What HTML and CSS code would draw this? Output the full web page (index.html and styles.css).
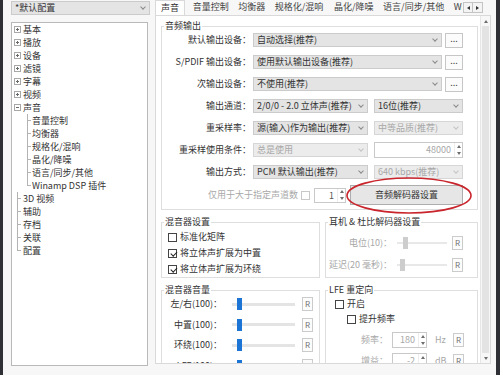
FILE: index.html
```html
<!DOCTYPE html>
<html lang="zh-CN">
<head>
<meta charset="utf-8">
<title>选项</title>
<link rel="stylesheet" href="styles.css">
</head>
<body>
<div class="window">
  <div class="edge edge-l"></div>
  <aside class="sidebar">
    <div class="combo profile"><span class="txt">*默认配置</span><span class="chev"></span></div>
    <ul class="tree">
      <li class="tn"><span class="exp"></span>基本</li>
      <li class="tn"><span class="exp"></span>播放</li>
      <li class="tn"><span class="exp"></span>设备</li>
      <li class="tn"><span class="exp"></span>滤镜</li>
      <li class="tn"><span class="exp"></span>字幕</li>
      <li class="tn"><span class="exp"></span>视频</li>
      <li class="tn"><span class="exp open"></span>声音</li>
      <li class="tc"><span class="ln"></span>音量控制</li>
      <li class="tc"><span class="ln"></span>均衡器</li>
      <li class="tc"><span class="ln"></span>规格化/混响</li>
      <li class="tc"><span class="ln"></span>晶化/降噪</li>
      <li class="tc"><span class="ln"></span>语言/同步/其他</li>
      <li class="tc last"><span class="ln"></span>Winamp DSP 插件</li>
      <li class="tl"><span class="ln"></span>3D 视频</li>
      <li class="tl"><span class="ln"></span>辅助</li>
      <li class="tl"><span class="ln"></span>存档</li>
      <li class="tl"><span class="ln"></span>关联</li>
      <li class="tl last"><span class="ln"></span>配置</li>
    </ul>
  </aside>
  <main class="main">
    <nav class="tabs">
      <div class="tablist">
        <span class="tab on">声音</span>
        <span class="tab">音量控制</span>
        <span class="tab">均衡器</span>
        <span class="tab">规格化/混响</span>
        <span class="tab">晶化/降噪</span>
        <span class="tab">语言/同步/其他</span>
        <span class="tab">Winamp DSP</span>
      </div>
      <div class="tabnav"><span class="nb"><i class="tri-l"></i></span><span class="nb"><i class="tri-r"></i></span></div>
    </nav>
    <section class="panel">
      <div class="content">
        <fieldset class="grp">
          <legend>音频输出</legend>
          <div class="rows">
            <div class="row">
              <span class="lbl">默认输出设备：</span>
              <div class="combo w-full"><span class="txt">自动选择(推荐)</span><span class="chev"></span></div>
              <span class="more">...</span>
            </div>
            <div class="row">
              <span class="lbl">S/PDIF 输出设备：</span>
              <div class="combo w-full"><span class="txt">使用默认输出设备(推荐)</span><span class="chev"></span></div>
              <span class="more">...</span>
            </div>
            <div class="row">
              <span class="lbl">次输出设备：</span>
              <div class="combo w-full"><span class="txt">不使用(推荐)</span><span class="chev"></span></div>
              <span class="more">...</span>
            </div>
            <div class="row">
              <span class="lbl">输出通道：</span>
              <div class="combo w-l"><span class="txt">2/0/0 - 2.0 立体声(推荐)</span><span class="chev"></span></div>
              <div class="combo w-r"><span class="txt">16位(推荐)</span><span class="chev"></span></div>
            </div>
            <div class="row">
              <span class="lbl">重采样率：</span>
              <div class="combo w-l"><span class="txt">源(输入)作为输出(推荐)</span><span class="chev"></span></div>
              <div class="combo w-r off"><span class="txt">中等品质(推荐)</span><span class="chev"></span></div>
            </div>
            <div class="row">
              <span class="lbl">重采样使用条件：</span>
              <div class="combo w-l off"><span class="txt">总是使用</span><span class="chev"></span></div>
              <div class="spin w-r off"><span class="v">48000</span><span class="arr"><i class="up"></i><i class="dn"></i></span></div>
            </div>
            <div class="row">
              <span class="lbl">输出方式：</span>
              <div class="combo w-l"><span class="txt">PCM 默认输出(推荐)</span><span class="chev"></span></div>
              <div class="combo w-r off"><span class="txt">640 kbps(推荐)</span><span class="chev"></span></div>
            </div>
            <div class="row tall">
              <span class="lbl lbl-wide dim">仅用于大于指定声道数</span>
              <span class="cb dis"></span>
              <div class="spin sp-ch"><span class="v">1</span><span class="arr"><i class="up"></i><i class="dn"></i></span></div>
              <span class="btn">音频解码器设置</span>
            </div>
          </div>
        </fieldset>

        <div class="pair">
          <fieldset class="grp mix">
            <legend>混音器设置</legend>
            <div class="ck"><span class="cb"></span>标准化矩阵</div>
            <div class="ck"><span class="cb on"></span>将立体声扩展为中置</div>
            <div class="ck"><span class="cb on"></span>将立体声扩展为环绕</div>
          </fieldset>
          <fieldset class="grp hp">
            <legend>耳机 &amp; 杜比解码器设置</legend>
            <div class="srow">
              <span class="slbl dim">电位(10)：</span>
              <div class="slider hp-s"><span class="trk" style="width:6px"></span><span class="thumb"></span><span class="trk rest"></span></div>
              <span class="rbtn">R</span>
            </div>
            <div class="srow">
              <span class="slbl dim">延迟(20 毫秒)：</span>
              <div class="slider hp-s"><span class="trk" style="width:3px"></span><span class="thumb"></span><span class="trk rest"></span></div>
              <span class="rbtn">R</span>
            </div>
          </fieldset>
        </div>

        <div class="pair">
          <fieldset class="grp vol">
            <legend>混音器音量</legend>
            <div class="vrow">
              <span class="vlbl">左/右(100)：</span>
              <div class="slider v-s"><span class="trk" style="width:5px"></span><span class="thumb"></span><span class="trk rest"></span></div>
              <span class="rbtn">R</span>
            </div>
            <div class="vrow">
              <span class="vlbl">中置(100)：</span>
              <div class="slider v-s"><span class="trk" style="width:5px"></span><span class="thumb"></span><span class="trk rest"></span></div>
              <span class="rbtn">R</span>
            </div>
            <div class="vrow">
              <span class="vlbl">环绕(100)：</span>
              <div class="slider v-s"><span class="trk" style="width:5px"></span><span class="thumb"></span><span class="trk rest"></span></div>
              <span class="rbtn">R</span>
            </div>
            <div class="vrow">
              <span class="vlbl">LFE(100)：</span>
              <div class="slider v-s"><span class="trk" style="width:5px"></span><span class="thumb"></span><span class="trk rest"></span></div>
              <span class="rbtn">R</span>
            </div>
          </fieldset>
          <fieldset class="grp lfe">
            <legend>LFE 重定向</legend>
            <div class="ck l1"><span class="cb"></span>开启</div>
            <div class="ck l2"><span class="cb"></span>提升频率</div>
            <div class="frow">
              <span class="flbl dim">频率：</span>
              <div class="spin sp-f off"><span class="v">180</span><span class="arr"><i class="up"></i><i class="dn"></i></span></div>
              <span class="unit dim">Hz</span>
              <span class="rbtn">R</span>
            </div>
            <div class="frow">
              <span class="flbl dim">增益：</span>
              <div class="spin sp-f off"><span class="v">-2</span><span class="arr"><i class="up"></i><i class="dn"></i></span></div>
              <span class="unit dim">dB</span>
              <span class="rbtn">R</span>
            </div>
          </fieldset>
        </div>
      </div>
      <div class="vscroll">
        <span class="sa"><i class="up"></i></span>
        <span class="strack"></span>
        <span class="sa"><i class="dn"></i></span>
      </div>
    </section>
  </main>
  <div class="edge edge-r"></div>
</div>
<svg class="mark" width="132" height="40" viewBox="0 0 132 40"><ellipse cx="65" cy="19.5" rx="62" ry="17.5" fill="none" stroke="#c9252c" stroke-width="1.6"/></svg>
</body>
</html>
```
FILE: styles.css
```css
* { box-sizing: border-box; }
html, body { margin: 0; padding: 0; }
body {
  width: 500px; height: 375px; overflow: hidden; position: relative;
  background: #f7f7f7; color: #333;
  font-family: "Noto Sans CJK SC", "Noto Sans", sans-serif;
  font-size: 9px; line-height: 12px;
}
.window { display: flex; height: 375px; }
.edge { flex: none; background: #2f3036; }
.edge-l { width: 3px; }
.edge-r { width: 4px; margin-left: 5px; }

/* sidebar */
.sidebar { flex: none; width: 139px; margin-left: 8px; display: flex; flex-direction: column; }
.combo {
  display: flex; align-items: center; height: 14px; padding-left: 3px;
  background: #e4e4e4; border: 1px solid #cbcbcb; white-space: nowrap; overflow: hidden;
}
.combo .txt { flex: 1; overflow: hidden; line-height: 12px; }
.chev { flex: none; width: 12px; height: 12px; display: flex; align-items: center; justify-content: center; }
.chev::before {
  content: ""; width: 3px; height: 3px; margin-top: -2px;
  border-right: 1px solid #8a8a8a; border-bottom: 1px solid #8a8a8a; transform: rotate(45deg);
}
.profile { margin-top: 1px; }
.tree {
  list-style: none; margin: 7px 0 0; padding: 0; width: 137px; height: 344px;
  background: #fff; border: 1px solid #b9b9b9;
}
.tree li { display: flex; align-items: center; height: 13px; line-height: 13px; white-space: nowrap; }
.exp { flex: none; width: 7px; height: 7px; margin: 0 2px; border: 1px solid #a8a8a8; position: relative; }
.exp::before { content: ""; position: absolute; left: 1px; right: 1px; top: 2px; height: 1px; background: #6a6a6a; }
.exp::after { content: ""; position: absolute; top: 1px; bottom: 1px; left: 2px; width: 1px; background: #6a6a6a; }
.exp.open::after { display: none; }
.ln {
  flex: none; align-self: stretch;
  background:
    linear-gradient(#b3b3b3, #b3b3b3) 0 0 / 1px 100% no-repeat,
    linear-gradient(#b3b3b3, #b3b3b3) 0 6px / 4px 1px no-repeat;
}
.last .ln {
  background:
    linear-gradient(#b3b3b3, #b3b3b3) 0 0 / 1px 7px no-repeat,
    linear-gradient(#b3b3b3, #b3b3b3) 0 6px / 4px 1px no-repeat;
}
.tc .ln { width: 5px; margin-left: 15px; }
.tl .ln { width: 6px; margin-left: 5px; }

/* main */
.main { flex: none; width: 336px; margin-left: 5px; height: 364px; display: flex; flex-direction: column; }
.tabs { flex: none; height: 15px; display: flex; position: relative; z-index: 1; }
.tablist { flex: none; width: 307px; display: flex; overflow: hidden; white-space: nowrap; }
.tab { flex: none; height: 15px; line-height: 14px; padding: 0 4.75px; color: #444; }
.tab.on { background: #fff; border: 1px solid #d9d9d9; border-bottom: 0; height: 16px; padding: 0 5px; margin-right: 3px; color: #333; }
.tab:nth-child(4) { padding-right: 6px; }
.tabnav { flex: none; display: flex; margin: 2px 0 0 1px; height: 11px; }
.nb { width: 10px; height: 11px; border: 1px solid #c4c4c4; background: #f4f4f4; display: flex; align-items: center; justify-content: center; }
.nb + .nb { border-left: 0; }
.tri-l { width: 0; height: 0; border-top: 2.5px solid transparent; border-bottom: 2.5px solid transparent; border-right: 3px solid #333; }
.tri-r { width: 0; height: 0; border-top: 2.5px solid transparent; border-bottom: 2.5px solid transparent; border-left: 3px solid #333; }

.panel { flex: 1; display: flex; background: #fff; border: 1px solid #d9d9d9; overflow: hidden; }
.content { flex: 1; padding: 4px 2px 0 5px; overflow: hidden; }

.grp { margin: 0; border: 1px solid #dedede; padding: 1px 0 4px; min-width: 0; }
.grp legend { padding: 0 1px; margin-left: 2px; height: 12px; line-height: 12px; }
.rows { display: flex; flex-direction: column; gap: 8px; }
.row { display: flex; align-items: center; height: 14px; }
.row.tall { height: 20px; margin-top: -2px; }
.lbl { flex: none; width: 89px; margin-right: 2px; text-align: right; white-space: nowrap; }
.lbl-wide { width: 136px; margin-right: 3px; }
.dim { color: #a8a8a8; }
.w-full { width: 189px; }
.w-l { width: 115px; flex: none; }
.w-r { width: 89px; flex: none; margin-left: 6px; }
.combo.off { background: #ececec; border-color: #d6d6d6; color: #a8a8a8; }
.combo.off .chev::before { border-color: #c4c4c4; }
.more {
  flex: none; width: 18px; height: 15px; margin-left: 3px; border: 1px solid #c6c6c6; background: #fbfbfb;
  text-align: center; line-height: 10px; color: #444;
}
.spin { display: flex; height: 16px; border: 1px solid #c9c9c9; background: #fff; }
.spin .v { flex: 1; text-align: right; padding-right: 3px; line-height: 14px; }
.spin.off .v { color: #a8a8a8; }
.arr { flex: none; width: 8px; display: flex; flex-direction: column; border-left: 1px solid #ededed; }
.arr i { flex: 1; display: flex; align-items: center; justify-content: center; }
.arr i::before, .sa i::before { content: ""; width: 0; height: 0; border-left: 2.5px solid transparent; border-right: 2.5px solid transparent; }
.arr i.up::before, .sa i.up::before { border-bottom: 3px solid #6d6d6d; }
.arr i.dn::before, .sa i.dn::before { border-top: 3px solid #6d6d6d; }
.cb { flex: none; width: 9px; height: 9px; border: 1px solid #444; background: #fff; position: relative; }
.cb.dis { border-color: #c8c8c8; margin-right: 4px; }
.cb.on::after {
  content: ""; position: absolute; left: 2.5px; top: 0px; width: 2.5px; height: 5px;
  border-right: 1px solid #222; border-bottom: 1px solid #222; transform: rotate(45deg);
}
.sp-ch { width: 32px; flex: none; margin-right: 4px; height: 15px; }
.sp-ch .v { color: #555; }
.btn {
  flex: none; width: 113px; height: 20px; border: 1px solid #adadad; background: #e6e6e6;
  text-align: center; line-height: 18px;
}

.pair { display: grid; grid-template-columns: 159px 153px; column-gap: 5px; margin-top: 6px; }
.mix { padding: 1px 0 0; }
.ck { display: flex; align-items: center; height: 16px; padding-left: 6px; white-space: nowrap; }
.ck .cb { margin-right: 3px; }
.hp { padding: 4px 0 0; }
.srow { display: flex; align-items: center; height: 22px; }
.slbl { flex: none; width: 66px; margin-right: 5px; text-align: right; white-space: nowrap; }
.slider { flex: none; display: flex; align-items: center; height: 14px; }
.trk { flex: none; height: 3px; background: #e4e4e4; }
.trk.rest { flex: 1; }
.thumb { flex: none; width: 5px; height: 12px; background: #1c74d4; }
.hp-s { width: 50px; margin-right: 5px; }
.hp-s .trk { height: 2px; background: #e8e8e8; }
.hp-s .thumb { background: #cdcdcd; }
.rbtn {
  flex: none; width: 11px; height: 14px; border: 1px solid #cbcbcb; background: #fcfcfc;
  text-align: center; line-height: 12px; font-size: 8px; color: #707070;
}
.vol { padding: 1px 0 0; }
.vol .vrow + .vrow { margin-top: 6.5px; }
.vrow { display: flex; align-items: center; height: 14px; }
.vlbl { flex: none; width: 60px; margin-right: 10px; text-align: right; white-space: nowrap; }
.v-s { width: 63px; margin-right: 7px; }
.lfe { padding: 1px 0 0; }
.ck.l1 { height: 14px; padding-left: 9px; }
.ck.l2 { height: 14px; margin-top: 1px; padding-left: 21px; }
.frow { display: flex; align-items: center; height: 16px; margin-top: 6px; }
.frow + .frow { margin-top: 5px; }
.flbl { flex: none; width: 62px; margin-right: 4px; text-align: right; }
.sp-f { width: 35px; flex: none; }
.unit { flex: none; width: 12px; margin: 0 6px 0 8px; }

.vscroll { flex: none; width: 10px; display: flex; flex-direction: column; background: #f7f7f7; border-left: 1px solid #e6e6e6; }
.sa { flex: none; height: 10px; display: flex; align-items: center; justify-content: center; }
.sa i { display: flex; }
.strack { flex: 1; margin: 0 1px; background: #e3e3e3; }

.mark { position: absolute; left: 344px; top: 176px; }
```
